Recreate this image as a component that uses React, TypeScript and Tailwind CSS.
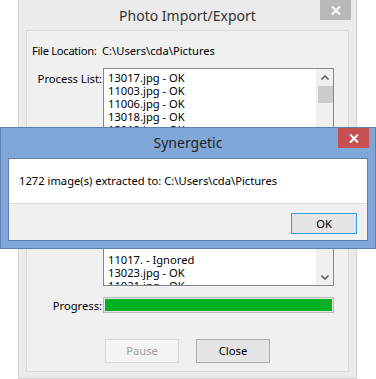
import React from "react";

const topItems = [
  "13017.jpg - OK",
  "11003.jpg - OK",
  "11006.jpg - OK",
  "13018.jpg - OK",
  "13019.jpg - OK",
];

const bottomItems = ["11017. - Ignored", "13023.jpg - OK", "11021.jpg - OK"];

const CloseX: React.FC = () => (
  <svg width="10" height="9" viewBox="0 0 10 9">
    <path d="M1 0.5 L9 8.5 M9 0.5 L1 8.5" stroke="white" strokeWidth="2" />
  </svg>
);

const ProcessList: React.FC = () => (
  <div className="flex w-[231px] h-[218px] border border-[#828790] bg-white">
    <div className="flex-1 flex flex-col justify-between overflow-hidden pl-[4px] pt-[2px]">
      <div className="flex flex-col">
        {topItems.map((t) => (
          <div key={t} className="h-[13px] leading-[13px] whitespace-nowrap">
            {t}
          </div>
        ))}
      </div>
      <div className="flex flex-col mb-[-7px]">
        {bottomItems.map((t) => (
          <div key={t} className="h-[13px] leading-[13px] whitespace-nowrap">
            {t}
          </div>
        ))}
      </div>
    </div>
    {/* scrollbar */}
    <div className="w-[17px] bg-[#f0f0f0] flex flex-col items-center justify-between border-l border-[#f0f0f0]">
      <div className="flex flex-col w-full items-center">
        <div className="h-[16px] flex items-center justify-center">
          <svg width="8" height="5" viewBox="0 0 8 5">
            <path d="M0.5 4.5 L4 1 L7.5 4.5" stroke="#606060" strokeWidth="1.6" fill="none" />
          </svg>
        </div>
        <div className="w-[15px] h-[17px] bg-[#cdcdcd] mt-[1px]" />
      </div>
      <div className="h-[16px] flex items-center justify-center">
        <svg width="8" height="5" viewBox="0 0 8 5">
          <path d="M0.5 0.5 L4 4 L7.5 0.5" stroke="#606060" strokeWidth="1.6" fill="none" />
        </svg>
      </div>
    </div>
  </div>
);

const PhotoWindow: React.FC = () => (
  <div className="ml-[18px] w-[339px] h-[379px] bg-[#ebebeb] border-x border-b border-[#d4d4d4] flex flex-col">
    <div className="relative h-[30px] flex items-center justify-center">
      <span className="text-[14px] text-[#333333] mt-[1px]">Photo Import/Export</span>
      <div className="absolute right-[5px] top-0 w-[31px] h-[20px] bg-[#b8b8b8] flex items-center justify-center">
        <CloseX />
      </div>
    </div>
    <div className="mx-[7px] h-[342px] border border-[#dadada] bg-[#f0f0f0] text-[11.2px] text-black flex flex-col">
      <div className="mt-[12px] h-[15px] leading-[15px] flex whitespace-nowrap">
        <span className="ml-[5px] w-[70px] shrink-0 tracking-[-0.3px]">File Location:</span>
        <span>C:\Users\cda\Pictures</span>
      </div>
      <div className="mt-[10px] flex">
        <div className="w-[75px] text-right pt-[3px] leading-[15px] whitespace-nowrap">Process List:</div>
        <div className="ml-[1px]">
          <ProcessList />
        </div>
      </div>
      <div className="mt-[11px] flex items-center">
        <div className="w-[75px] text-right leading-[15px]">Progress:</div>
        <div className="ml-[1px] w-[231px] h-[16px] border border-[#bcbcbc] bg-[#e6e6e6] p-px">
          <div className="h-full w-full bg-[#06b025]" />
        </div>
      </div>
      <div className="mt-[26px] flex ml-[78px] gap-[17px]">
        <button className="w-[74px] h-[24px] border border-[#d9d9d9] bg-[#f4f4f4] text-[#a0a0a0]">
          Pause
        </button>
        <button className="w-[74px] h-[24px] border border-[#acacac] bg-[#e5e5e5] text-black">
          Close
        </button>
      </div>
    </div>
  </div>
);

const MessageDialog: React.FC = () => (
  <div className="absolute left-0 top-[127px] w-[376px] bg-[#80a7d8] border border-[#5b7fb1] flex flex-col">
    <div className="relative h-[30px] flex items-center justify-center">
      <span className="text-[14px] text-[#222222] mb-[2px]">Synergetic</span>
      <div className="absolute right-[6px] top-0 w-[31px] h-[20px] bg-[#c75050] flex items-center justify-center">
        <CloseX />
      </div>
    </div>
    <div className="mx-[7px] mb-[7px] border border-[#5b7fb1] text-[11.2px] text-black">
      <div className="bg-white h-[45px] flex items-center pl-[10px] border-b border-[#dfdfdf]">
        1272 image(s) extracted to: C:\Users\cda\Pictures
      </div>
      <div className="bg-[#f0f0f0] h-[36px] flex justify-end items-start pr-[10px] pt-[9px]">
        <button className="w-[66px] h-[21px] border border-[#3399ff] bg-[#e5e5e5] text-black leading-[19px]">
          OK
        </button>
      </div>
    </div>
  </div>
);

export default function App() {
  return (
    <div
      className="relative w-[376px] h-[379px] bg-white overflow-hidden"
      style={{ fontFamily: '"Noto Sans", "Open Sans", sans-serif' }}
    >
      <PhotoWindow />
      <MessageDialog />
    </div>
  );
}
